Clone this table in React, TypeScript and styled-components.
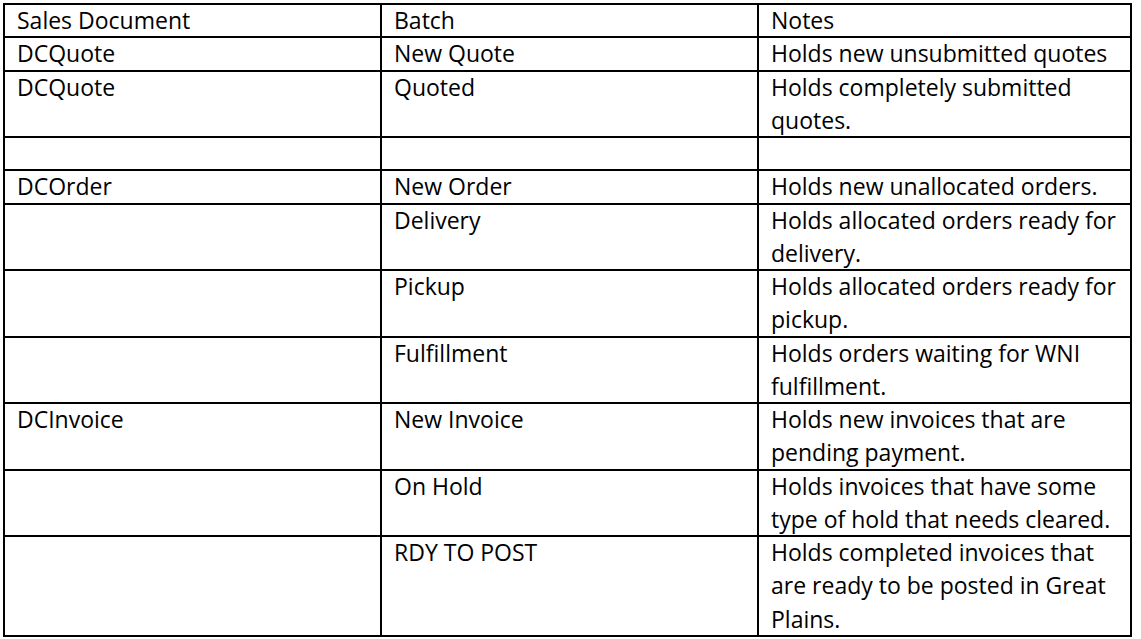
import React from 'react'
import styled, { createGlobalStyle } from 'styled-components'

type Row = {
  doc: string,
  batch: string,
  notes: string[]
}

const rows: Row[] = [
  { doc: 'Sales Document', batch: 'Batch', notes: ['Notes'] },
  { doc: 'DCQuote', batch: 'New Quote', notes: ['Holds new unsubmitted quotes'] },
  { doc: 'DCQuote', batch: 'Quoted', notes: ['Holds completely submitted', 'quotes.'] },
  { doc: '', batch: '', notes: [''] },
  { doc: 'DCOrder', batch: 'New Order', notes: ['Holds new unallocated orders.'] },
  { doc: '', batch: 'Delivery', notes: ['Holds allocated orders ready for', 'delivery.'] },
  { doc: '', batch: 'Pickup', notes: ['Holds allocated orders ready for', 'pickup.'] },
  { doc: '', batch: 'Fulfillment', notes: ['Holds orders waiting for WNI', 'fulfillment.'] },
  { doc: 'DCInvoice', batch: 'New Invoice', notes: ['Holds new invoices that are', 'pending payment.'] },
  { doc: '', batch: 'On Hold', notes: ['Holds invoices that have some', 'type of hold that needs cleared.'] },
  { doc: '', batch: 'RDY TO POST', notes: ['Holds completed invoices that', 'are ready to be posted in Great', 'Plains.'] },
]

export default function App() {
  return (
    <>
      <GlobalStyle />
      <SalesTable>
        <colgroup>
          <col style={{ width: 377 }} />
          <col style={{ width: 377 }} />
          <col style={{ width: 373 }} />
        </colgroup>
        <tbody>
          {rows.map((row, index) =>
            <tr key={index}>
              <Cell><Lines>{row.doc || '\u00A0'}</Lines></Cell>
              <Cell><Lines>{row.batch || '\u00A0'}</Lines></Cell>
              <Cell>
                <Lines>
                  {row.notes.map((line, i) =>
                    <NoteLine key={i}>{line || '\u00A0'}</NoteLine>
                  )}
                </Lines>
              </Cell>
            </tr>
          )}
        </tbody>
      </SalesTable>
    </>
  )
}

const GlobalStyle = createGlobalStyle`
  html, body {
    margin: 0;
    padding: 0;
    background: #fff;
  }
  body {
    font-family: "Open Sans", "Noto Sans", sans-serif;
    color: #000;
  }
`

const SalesTable = styled.table`
  margin: 3px 0 0 3px;
  width: 1127px;
  table-layout: fixed;
  border-collapse: collapse;
  font-size: 23px;
  font-weight: 500;
`

const Cell = styled.td`
  border: 2px solid #000;
  padding: 0 6px 0 12px;
  vertical-align: top;
  line-height: 33.25px;
`

// the cell border eats into the lines a little, like the document the table comes from
const Lines = styled.div`
  margin: -1px 0;
`

const NoteLine = styled.div`
  white-space: nowrap;
`
